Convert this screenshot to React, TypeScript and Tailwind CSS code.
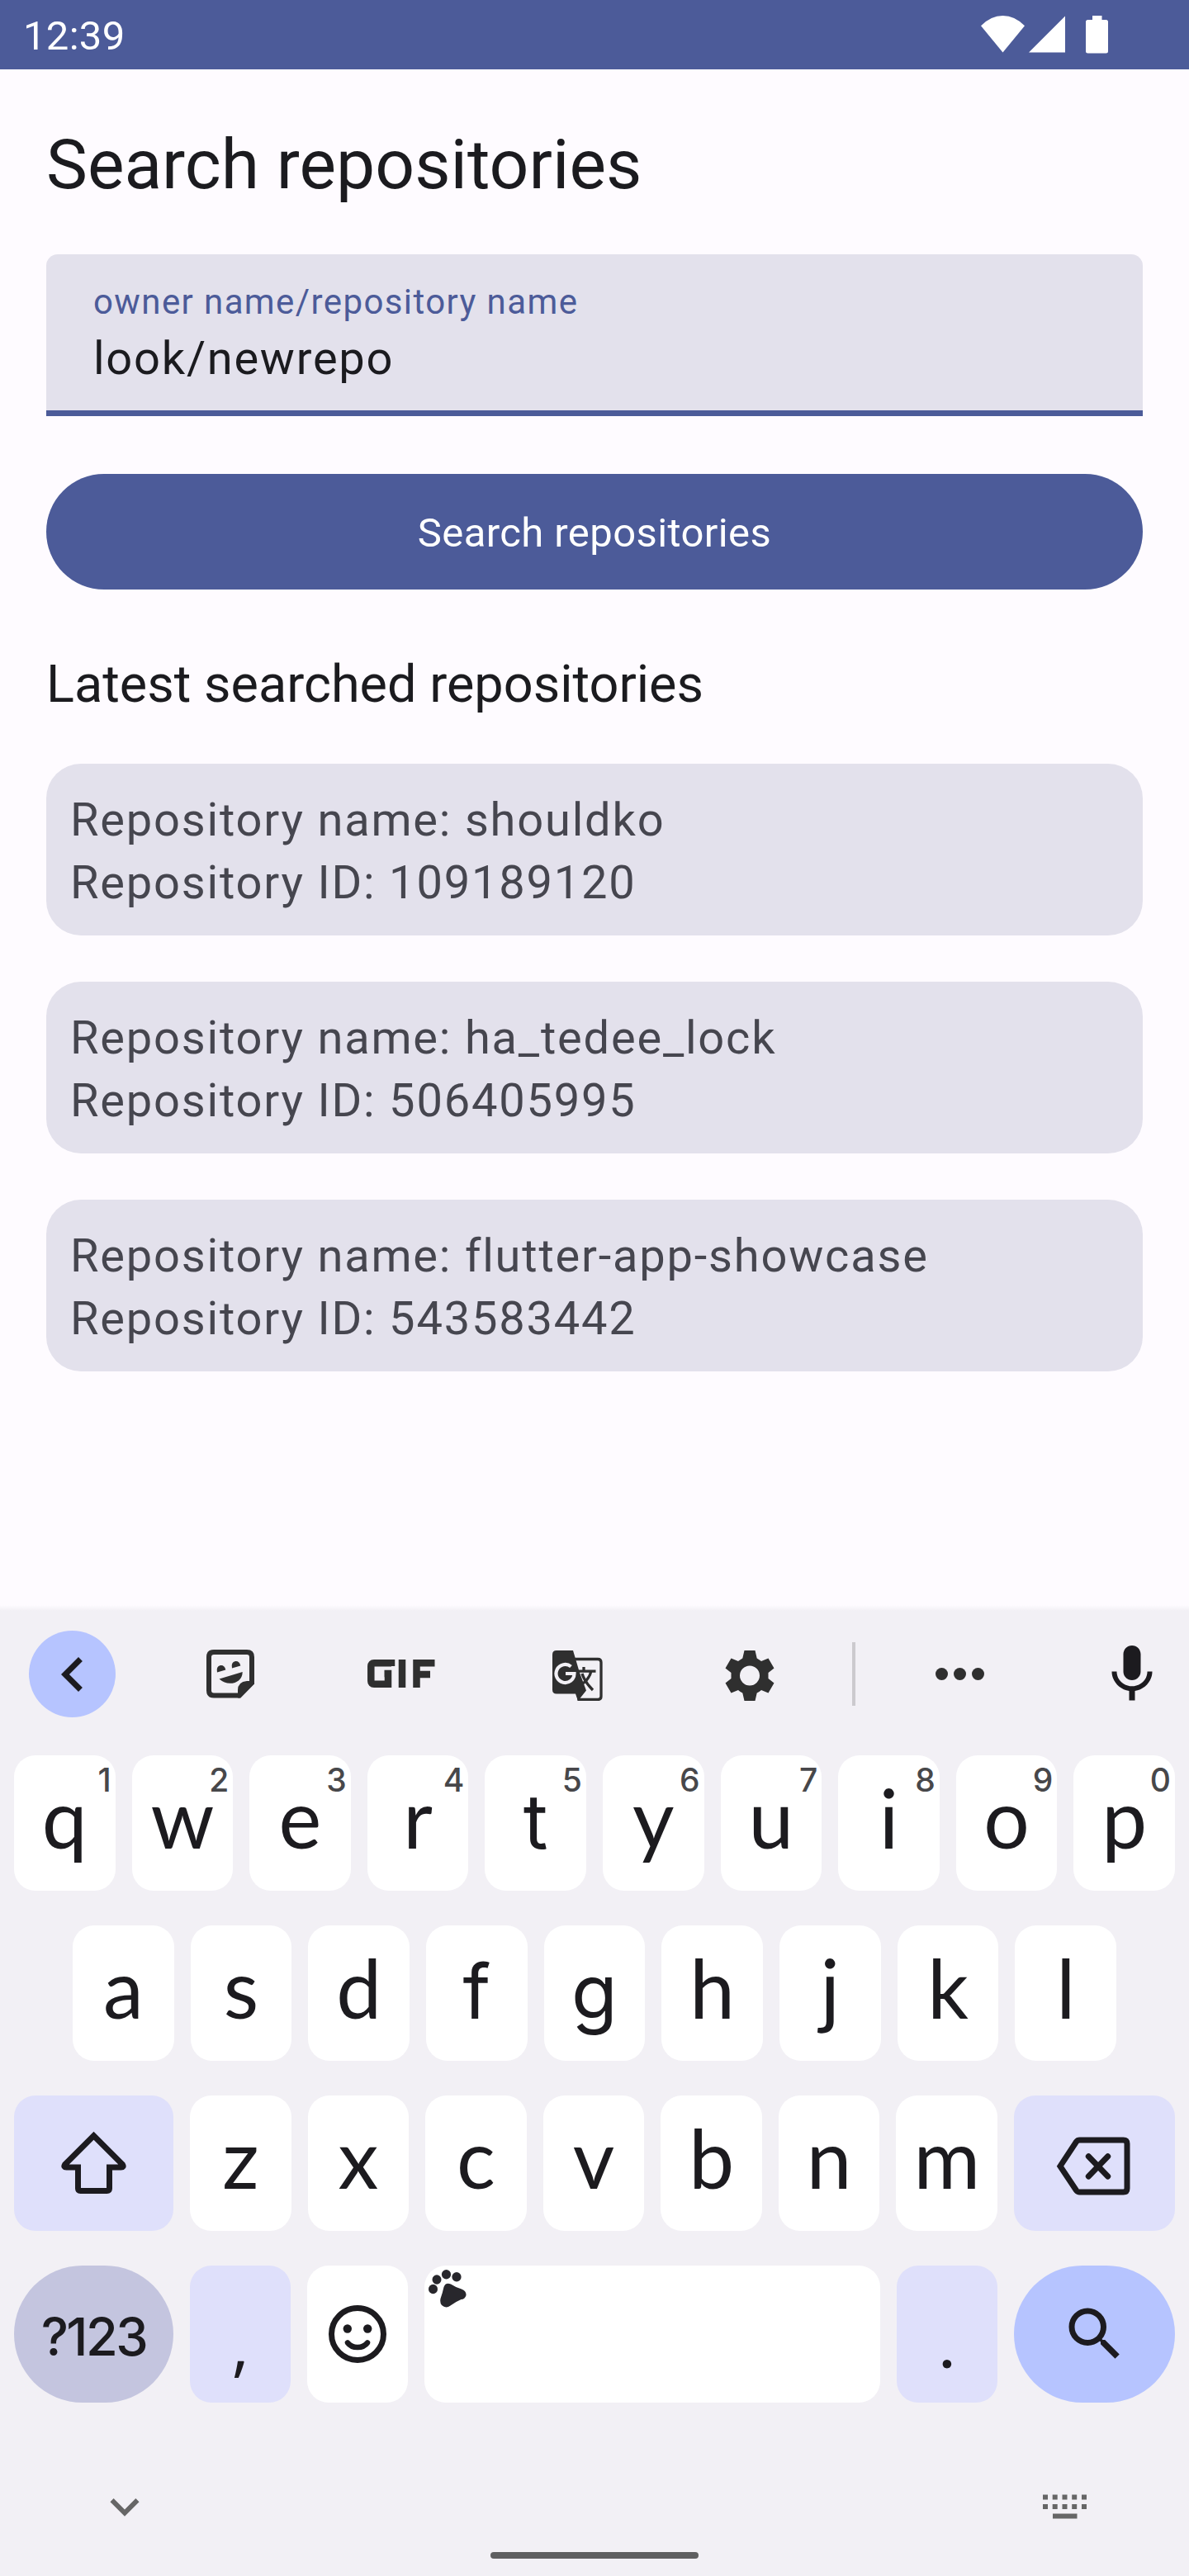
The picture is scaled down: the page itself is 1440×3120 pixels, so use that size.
import React from "react";
import { MdChevronLeft, MdExpandMore, MdMic, MdSearch } from "react-icons/md";

const INK = "#1c1b1f";

function StatusBar() {
  return (
    <header className="flex h-[84px] w-full items-center justify-between bg-[#4c5b99] pl-7 pr-[98px] text-white">
      <span className="mt-[3px] text-[49px] leading-[58px] tracking-[0.3px]">12:39</span>
      <svg className="block" width="154" height="84" viewBox="1188 0 154 84" fill="#fff">
        <path d="M1188 31.3Q1200 19 1214.5 19T1241 31.3L1214.5 63.5z" />
        <path d="M1246 63.5H1290V19.500z" />
        <path d="M1323 19h11.500v5h5q2.500 0 2.500 2.500v35.500q0 2.500-2.500 2.500h-22q-2.500 0-2.500-2.500V26.500q0-2.500 2.500-2.500h5.500z" />
      </svg>
    </header>
  );
}

function RepoCard({ name, id }: { name: string; id: string }) {
  return (
    <li className="h-[208px] rounded-[42px] bg-[#e3e1ec] pl-[29px] pt-[30px] text-[56px] leading-[76px] tracking-[1.8px] text-[#46464f]">
      <p className="whitespace-nowrap">Repository name: {name}</p>
      <p className="whitespace-nowrap">Repository ID: {id}</p>
    </li>
  );
}

function StickerIcon() {
  return (
    <svg width="58" height="59" viewBox="0 0 58 59" fill="#2f2f2f">
      <path
        d="M55 40V9q0-6-6-6H9Q3 3 3 9V49.500q0 6 6 6H40z"
        fill="none"
        stroke="#2f2f2f"
        strokeWidth="6"
      />
      <path d="M58 38H49Q38 39 38 49V58.500H41L58 41.500z" />
      <path d="M13 27.500Q11.500 20 17 19Q22 18.500 23.300 24.500z" />
      <path d="M31 22.500Q29.500 15 35 14Q40 13.500 41.300 19.500z" />
      <path d="M15.500 35.500L43.700 27Q43.500 36.500 34.500 40Q24 43 15.500 35.500z" />
    </svg>
  );
}

function GifIcon() {
  return (
    <svg width="82" height="34" viewBox="0 0 82 34" fill="none" stroke="#2f2f2f" strokeWidth="8.500">
      <path d="M29 8V4.300H8Q4.300 4.300 4.300 8V26Q4.300 29.700 8 29.700H25V17H20.500" />
      <path d="M42 0V34M59.500 34V4.300H81.500M59.500 18H76" />
    </svg>
  );
}

function TranslateIcon() {
  return (
    <svg width="61" height="61" viewBox="0 0 61 61">
      <path d="M24 10.500H55q4 0 4 4V55.500q0 4-4 4H32z" fill="none" stroke="#2f2f2f" strokeWidth="3.300" />
      <path d="M5 0H25L33 27L41 48.500L31 61L28 52.500H5Q0 52.500 0 47.500V5Q0 0 5 0z" fill="#2f2f2f" />
      <path d="M22.500 19.500A11 11 0 1 0 26.500 28H16" fill="none" stroke="#f2f0f5" strokeWidth="4.200" />
      <path d="M32 25.200H52.500M38 20V25M47 25Q45 34 37 40M36 28Q39 38 49 48" fill="none" stroke="#2f2f2f" strokeWidth="3.300" />
    </svg>
  );
}

function GearIcon() {
  return (
    <svg width="60" height="61" viewBox="-30 -30.500 60 61">
      <path
        fillRule="evenodd"
        fill="#2f2f2f"
        d="M-6.500-30.500H6.500L8.700-21Q11.500-19.500 14-17.500L22.500-21L29.500-9L22.500-3.500V3.500L29.500 9L22.500 21L14 17.500Q11.500 19.500 8.700 21L6.500 30.500H-6.500L-8.700 21Q-11.500 19.500-14 17.500L-22.500 21L-29.500 9L-22.500 3.500V-3.500L-29.500-9L-22.500-21L-14-17.500Q-11.500-19.500-8.700-21zM0-12A12 12 0 1 0 0 12A12 12 0 1 0 0-12z"
      />
    </svg>
  );
}

function Toolbar() {
  return (
    <div className="flex h-[105px] items-center pl-[35px]">
      <div className="flex size-[105px] items-center justify-center rounded-full bg-[#b6c4ff]">
        <MdChevronLeft size={84} color={INK} />
      </div>
      <div className="ml-[109.500px]"><StickerIcon /></div>
      <div className="-mt-0.5 ml-[137.500px]"><GifIcon /></div>
      <div className="ml-[142px] mt-1"><TranslateIcon /></div>
      <div className="ml-[148px] mt-[3px]"><GearIcon /></div>
      <div className="ml-[94px] h-[77px] w-1 bg-[#cccace]" />
      <div className="ml-[97px] flex gap-[7px]">
        <i className="size-[15px] rounded-full bg-[#2f2f2f]" />
        <i className="size-[15px] rounded-full bg-[#2f2f2f]" />
        <i className="size-[15px] rounded-full bg-[#2f2f2f]" />
      </div>
      <MdMic className="ml-[137px] shrink-0" size={84} color={INK} />
    </div>
  );
}

function Key({ label, hint }: { label: string; hint?: string }) {
  const straight = "gtf".includes(label);
  return (
    <div className="relative flex h-[164px] min-w-0 flex-1 justify-center rounded-[26px] bg-white">
      <span
        className={
          straight
            ? "mt-[20px] font-[Inter,sans-serif] text-[91px] leading-[120px]"
            : "mt-[15px] font-[Lato,sans-serif] text-[98px] leading-[120px]"
        }
      >
        {label}
      </span>
      {hint && (
        <span className="absolute right-[5px] top-[6px] font-[Inter,sans-serif] text-[39px] font-medium leading-[48px] text-[#47474a]">
          {hint}
        </span>
      )}
    </div>
  );
}

function ShiftIcon() {
  return (
    <svg width="84" height="84" viewBox="0 0 84 84" fill="none" stroke={INK} strokeWidth="7">
      <path d="M41.500 8.700L6.500 43.700Q4.500 47 8.500 47H22.500V72.500Q22.500 75.500 25.500 75.500H57.500Q60.500 75.500 60.500 72.500V47H74.500Q78.500 47 76.500 43.700z" />
    </svg>
  );
}

function BackspaceIcon() {
  return (
    <svg width="98" height="84" viewBox="0 0 98 84" fill="none" stroke={INK} strokeWidth="7">
      <path d="M7 45.700L26.500 16Q28 14 30.500 14H83.500Q88 14 88 18.500V72.500Q88 77 83.500 77H30.500Q28 77 26.500 75z" />
      <path d="M41.300 33.700L64.700 58M64.700 33.700L41.300 58" strokeLinecap="round" />
    </svg>
  );
}

function EmojiIcon() {
  return (
    <svg width="70" height="70" viewBox="0 0 70 70" fill="none" stroke={INK} strokeWidth="7">
      <circle cx="35" cy="35" r="31.500" />
      <circle cx="22.800" cy="28.500" r="5.200" fill={INK} stroke="none" />
      <circle cx="47.200" cy="28.500" r="5.200" fill={INK} stroke="none" />
      <path d="M23 45.500Q27 51 35 51T47 45.500" strokeWidth="6.500" strokeLinecap="round" />
    </svg>
  );
}

function PawIcon() {
  return (
    <svg width="46" height="46" viewBox="0 0 46 46" fill="#28272c">
      <ellipse cx="5.500" cy="23.500" rx="5.500" ry="5.700" />
      <ellipse cx="10" cy="12" rx="5.500" ry="5.700" />
      <ellipse cx="21.500" cy="5.700" rx="5.600" ry="5.700" />
      <ellipse cx="34" cy="8.700" rx="5.600" ry="5.700" />
      <path d="M18.500 21Q20.500 15 27 17.500Q33 21.500 40 23.500Q46 26 45.500 31Q44 36 39.500 36Q32.500 39 26.500 43.500Q21 47.500 16 43Q13.500 40 14.500 35Q17 28 18.500 21z" />
    </svg>
  );
}

function Keyboard() {
  const top = "qwertyuiop".split("");
  const middle = "asdfghjkl".split("");
  const lower = "zxcvbnm".split("");
  return (
    <section className="flex flex-1 flex-col bg-[linear-gradient(#fefbff,#f2f0f5_7px)] pt-[31px] text-[#1c1b1f]">
      <Toolbar />
      <div className="mt-[46px] flex flex-col gap-[42px] px-[17px]">
        <div className="flex gap-5">
          {top.map((c, i) => (
            <Key key={c} label={c} hint={String((i + 1) % 10)} />
          ))}
        </div>
        <div className="flex gap-5 px-[71px]">
          {middle.map((c) => (
            <Key key={c} label={c} />
          ))}
        </div>
        <div className="flex gap-5">
          <div className="flex w-[193px] items-center justify-center rounded-[26px] bg-[#dfe0fb]"><ShiftIcon /></div>
          {lower.map((c) => (
            <Key key={c} label={c} />
          ))}
          <div className="flex w-[195px] items-center justify-center rounded-[26px] bg-[#dfe0fb]"><BackspaceIcon /></div>
        </div>
        <div className="flex h-[166px] gap-5">
          <div className="flex w-[193px] justify-center rounded-full bg-[#c4c5df]">
            <span className="mt-[46px] font-[Inter,sans-serif] text-[63px] font-medium leading-[80px] tracking-[-2.5px]">?123</span>
          </div>
          <div className="flex w-[122px] justify-center rounded-[26px] bg-[#dfe0fb]">
            <span className="mt-[33px] font-['Open_Sans',sans-serif] text-[82px] leading-[120px]">,</span>
          </div>
          <div className="flex w-[122px] items-center justify-center rounded-[26px] bg-white"><EmojiIcon /></div>
          <div className="flex-1 rounded-[26px] bg-white pl-[5px] pt-[5px]"><PawIcon /></div>
          <div className="flex w-[122px] justify-center rounded-[26px] bg-[#dfe0fb]">
            <span className="mt-[32px] font-[Lato,sans-serif] text-[84px] leading-[120px]">.</span>
          </div>
          <div className="flex w-[195px] items-center justify-center rounded-full bg-[#b6c4ff]">
            <MdSearch size={84} color={INK} />
          </div>
        </div>
      </div>
      <div className="mt-[91px] flex items-start justify-between pl-[116px] pr-[123px]">
        <MdExpandMore size={70} color="#666666" />
        <svg className="mt-5" width="54" height="30" viewBox="0 0 54 30" fill="#666">
          {[0, 11.7, 23.5, 35.2, 47].map((x) => (
            <React.Fragment key={x}>
              <rect x={x} y="0.500" width="6" height="6" />
              <rect x={x} y="12" width="6" height="6" />
            </React.Fragment>
          ))}
          <rect x="12" y="23.500" width="29.500" height="6" />
        </svg>
      </div>
      <div className="mx-auto mt-5 h-2 w-[252px] rounded-full bg-[#5f5f61]" />
    </section>
  );
}

export default function App() {
  return (
    <div className="flex h-[3120px] w-[1440px] flex-col overflow-hidden bg-[#fefbff] font-[Roboto,sans-serif] text-[#1b1b1f]">
      <StatusBar />
      <main className="flex h-[1860px] flex-col px-14">
        <h1 className="mt-[60px] text-[84px] leading-[112px]">Search repositories</h1>
        <div className="mt-[52px] h-[196px] rounded-t-[14px] border-b-[7px] border-[#4c5b99] bg-[#e3e1ec] pl-[57px] pt-[31px]">
          <div className="text-[42px] leading-[54px] tracking-[1.4px] text-[#4c5b99]">owner name/repository name</div>
          <div className="text-[56px] leading-[82px] tracking-[1.75px]">look/newrepo</div>
        </div>
        <button className="mt-[70px] h-[140px] rounded-full bg-[#4c5b99] pt-1 text-[49px] leading-[70px] tracking-[0.4px] text-white">
          Search repositories
        </button>
        <h2 className="mt-[73px] text-[63px] leading-[84px]">Latest searched repositories</h2>
        <ul className="mt-[54px] flex flex-col gap-14">
          <RepoCard name="shouldko" id="109189120" />
          <RepoCard name="ha_tedee_lock" id="506405995" />
          <RepoCard name="flutter-app-showcase" id="543583442" />
        </ul>
      </main>
      <Keyboard />
    </div>
  );
}
